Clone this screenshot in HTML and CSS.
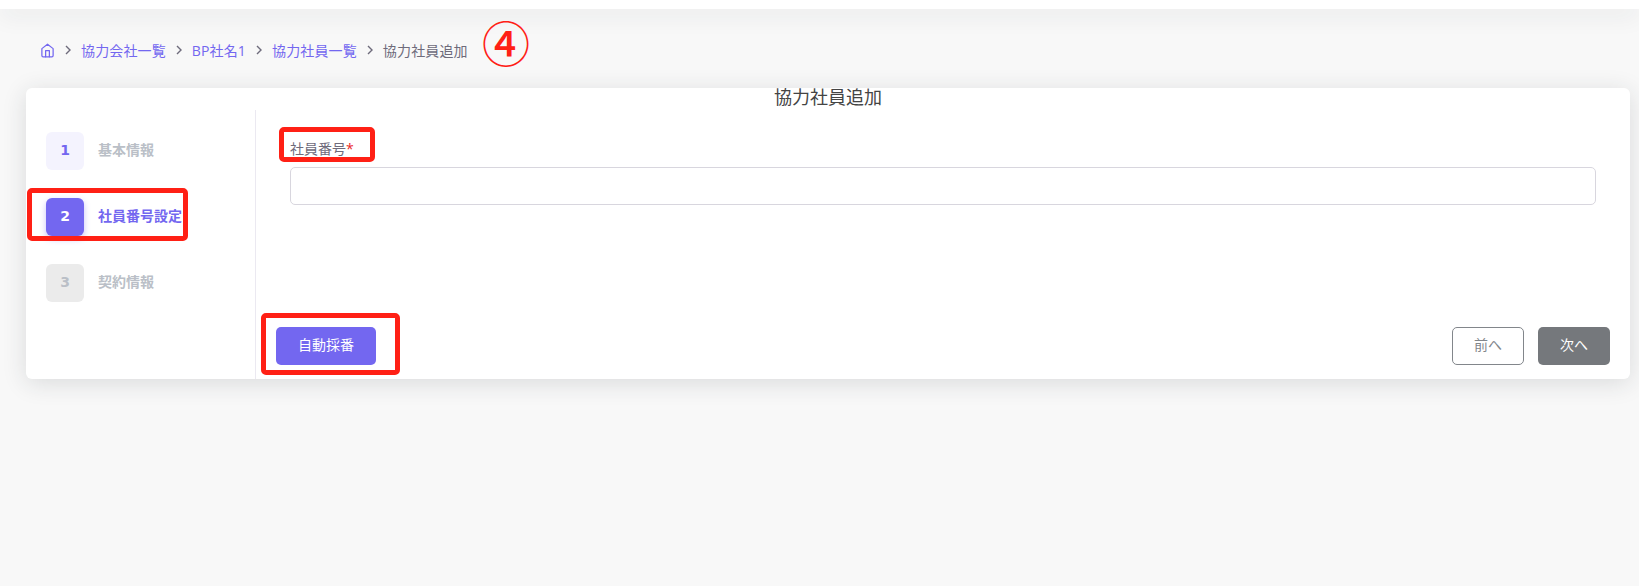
FILE: index.html
```html
<!DOCTYPE html>
<html lang="ja">
<head>
    <meta charset="UTF-8">
    <meta name="viewport" content="width=device-width, initial-scale=1.0">
    <title>協力社員追加</title>
    <link rel="stylesheet" href="styles.css">
</head>
<body>

<div class="navbar"></div>

<nav class="breadcrumb">
    <svg class="home-icon" viewBox="0 0 24 24" fill="none" stroke="currentColor" stroke-width="2" stroke-linecap="round" stroke-linejoin="round">
        <path d="M3 9l9-7 9 7v11a2 2 0 0 1-2 2H5a2 2 0 0 1-2-2z"></path>
        <polyline points="9 22 9 12 15 12 15 22"></polyline>
    </svg>
    <span class="sep"><svg viewBox="0 0 6 10" fill="none" stroke="currentColor" stroke-width="1.4"><polyline points="1 1 5 5 1 9"></polyline></svg></span>
    <a class="crumb">協力会社一覧</a>
    <span class="sep"><svg viewBox="0 0 6 10" fill="none" stroke="currentColor" stroke-width="1.4"><polyline points="1 1 5 5 1 9"></polyline></svg></span>
    <a class="crumb">BP社名1</a>
    <span class="sep"><svg viewBox="0 0 6 10" fill="none" stroke="currentColor" stroke-width="1.4"><polyline points="1 1 5 5 1 9"></polyline></svg></span>
    <a class="crumb">協力社員一覧</a>
    <span class="sep"><svg viewBox="0 0 6 10" fill="none" stroke="currentColor" stroke-width="1.4"><polyline points="1 1 5 5 1 9"></polyline></svg></span>
    <span class="crumb-current">協力社員追加</span>
</nav>

<div class="card">
    <div class="card-title">協力社員追加</div>
    <div class="wizard">
        <aside class="steps">
            <div class="step">
                <span class="step-box">1</span>
                <span class="step-label">基本情報</span>
            </div>
            <div class="step active">
                <span class="step-box">2</span>
                <span class="step-label">社員番号設定</span>
            </div>
            <div class="step disabled">
                <span class="step-box">3</span>
                <span class="step-label">契約情報</span>
            </div>
        </aside>
        <div class="content">
            <div class="field">
                <label class="field-label" for="emp-no">社員番号<span class="required">*</span></label>
                <input type="text" id="emp-no" class="field-input">
            </div>
            <div class="actions">
                <button class="btn btn-primary">自動採番</button>
                <div class="actions-right">
                    <button class="btn btn-outline">前へ</button>
                    <button class="btn btn-secondary">次へ</button>
                </div>
            </div>
        </div>
    </div>
</div>

<!-- red annotations drawn over the screen -->
<div class="mark mark-step"></div>
<div class="mark mark-label"></div>
<div class="mark mark-auto"></div>
<div class="mark-number">④</div>

</body>
</html>
```

FILE: styles.css
```css
body {
    font-family: "Open Sans", "Noto Sans CJK JP", sans-serif;
    margin: 0;
    height: 586px;
    overflow: hidden;
    position: relative;
    background-color: #f8f8f8;
    color: #6e6b7b;
    font-size: 14px;
}
.navbar {
    height: 9px;
    background-color: #fff;
    box-shadow: 0 4px 24px rgba(34, 41, 47, 0.12);
}

.breadcrumb {
    display: flex;
    align-items: center;
    height: 20px;
    margin: 31px 0 0 40px;
    font-size: 14px;
    letter-spacing: 0.14px;
}
.home-icon {
    width: 15px;
    height: 15px;
    color: #7367f0;
}
.sep {
    width: 26px;
    display: flex;
    justify-content: center;
    color: #6e6b7b;
}
.sep svg {
    width: 6px;
    height: 10px;
}
.crumb {
    color: #7367f0;
}
.crumb-current {
    color: #6e6b7b;
}

.card {
    margin: 28px 9px 0 26px;
    height: 291px;
    background-color: #fff;
    border-radius: 6px;
    box-shadow: 0 4px 24px rgba(34, 41, 47, 0.14);
    display: flex;
    flex-direction: column;
}
.card-title {
    height: 22px;
    line-height: 18px;
    text-align: center;
    font-size: 18px;
    color: #444;
}
.wizard {
    flex: 1;
    display: flex;
}

.steps {
    width: 230px;
    box-sizing: border-box;
    border-right: 1px solid #ebe9f1;
    padding: 22px 0 0 20px;
    display: flex;
    flex-direction: column;
    gap: 28px;
}
.step {
    display: flex;
    align-items: center;
    gap: 14px;
}
.step-box {
    width: 38px;
    height: 38px;
    box-sizing: border-box;
    padding-bottom: 2px;
    border-radius: 6px;
    display: flex;
    align-items: center;
    justify-content: center;
    font-family: "DejaVu Sans", sans-serif;
    font-weight: bold;
    font-size: 14px;
    background-color: #f4f3fe;
    color: #7367f0;
}
.step-label {
    font-weight: bold;
    color: #babfc7;
    padding-bottom: 4px;
}
.step.active .step-box {
    background-color: #7367f0;
    color: #fff;
    box-shadow: 0 3px 6px rgba(115, 103, 240, 0.4);
}
.step.active .step-label {
    color: #7367f0;
}
.step.disabled .step-box {
    background-color: #ebebeb;
    color: #babfc7;
}

.content {
    flex: 1;
    display: flex;
    flex-direction: column;
    padding: 0 20px 14px 20px;
}
.field {
    padding: 27px 14px 0 14px;
}
.field-label {
    display: block;
    height: 30px;
    line-height: 24px;
    color: #6e6b7b;
}
.required {
    color: #ea2a2a;
}
.field-input {
    display: block;
    width: 100%;
    height: 38px;
    box-sizing: border-box;
    border: 1px solid #d8d6de;
    border-radius: 5px;
}

.actions {
    margin-top: auto;
    display: flex;
    justify-content: space-between;
}
.actions-right {
    display: flex;
    gap: 14px;
}
.btn {
    height: 38px;
    box-sizing: border-box;
    border-radius: 5px;
    border: 1px solid transparent;
    font-family: inherit;
    font-size: 14px;
    padding: 0 0 5px 0;
}
.btn-primary {
    width: 100px;
    background-color: #7367f0;
    color: #fff;
}
.btn-outline {
    width: 72px;
    background-color: #fff;
    border-color: #82868b;
    color: #82868b;
}
.btn-secondary {
    width: 72px;
    background-color: #75787c;
    color: #fff;
}

.mark {
    position: absolute;
    box-sizing: border-box;
    border: 5px solid #ff2015;
    border-radius: 5px;
}
.mark-step {
    left: 27px;
    top: 188px;
    width: 161px;
    height: 53px;
}
.mark-label {
    left: 279px;
    top: 127px;
    width: 96px;
    height: 35px;
}
.mark-auto {
    left: 261px;
    top: 313px;
    width: 139px;
    height: 62px;
}
.mark-number {
    position: absolute;
    left: 482px;
    top: 11px;
    font-family: "Noto Sans CJK JP", sans-serif;
    font-size: 48px;
    font-weight: 500;
    line-height: 60px;
    color: #ff2015;
}
```
